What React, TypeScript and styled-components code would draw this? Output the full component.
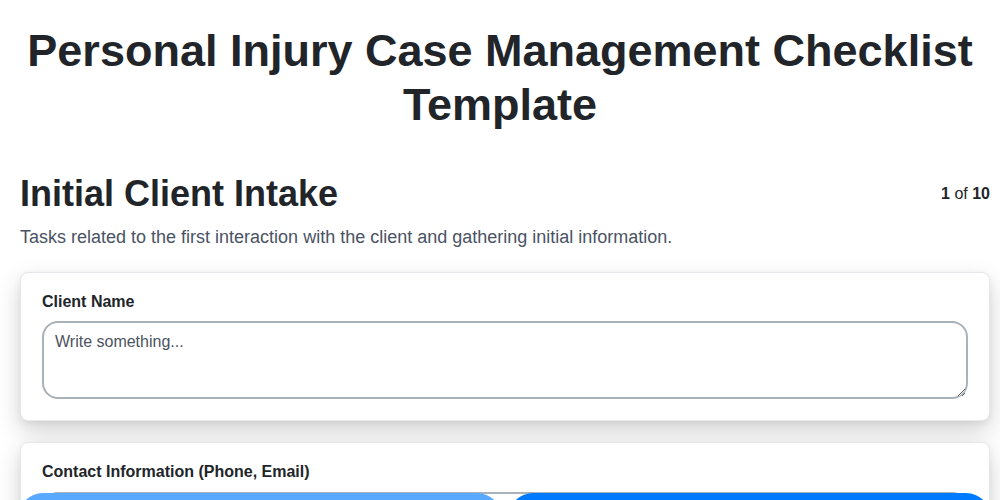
import React from "react";
import styled, { createGlobalStyle } from "styled-components";

const fields = [
  { id: "client-name", label: "Client Name" },
  { id: "contact", label: "Contact Information (Phone, Email)" },
  { id: "incident", label: "Date of Incident" },
];

const App = () => {
  return (
    <>
      <GlobalStyle />
      <Page>
        <Title>Personal Injury Case Management Checklist Template</Title>
        <Section>
          <SectionHeader>
            <SectionTitle>Initial Client Intake</SectionTitle>
            <Progress>
              <b>1</b> of <b>10</b>
            </Progress>
          </SectionHeader>
          <Description>
            Tasks related to the first interaction with the client and
            gathering initial information.
          </Description>
          <CardList>
            {fields.map((field) => (
              <Card key={field.id}>
                <Label htmlFor={field.id}>{field.label}</Label>
                <TextArea id={field.id} placeholder="Write something..." />
              </Card>
            ))}
          </CardList>
        </Section>
      </Page>
      <Footer>
        <NavButton $disabled>Previous</NavButton>
        <NavButton>Next</NavButton>
      </Footer>
    </>
  );
};

export default App;

const GlobalStyle = createGlobalStyle`
  * {
    box-sizing: border-box;
  }

  body {
    margin: 0;
    background: #ffffff;
    font-family: "Liberation Sans", Arial, sans-serif;
    color: #212529;
  }
`;

const Page = styled.main`
  display: flex;
  flex-direction: column;
  padding: 24px 0 80px;
`;

const Title = styled.h1`
  margin: 0 0 40px;
  padding: 0 20px;
  font-size: 45px;
  line-height: 1.2;
  font-weight: 700;
  text-align: center;
  color: #212529;
`;

const Section = styled.section`
  display: flex;
  flex-direction: column;
  padding: 0 10px 0 20px;
`;

const SectionHeader = styled.div`
  display: flex;
  align-items: center;
  justify-content: space-between;
`;

const SectionTitle = styled.h2`
  margin: 0;
  font-size: 36px;
  line-height: 1.2;
  font-weight: 700;
  color: #212529;
`;

const Progress = styled.div`
  font-size: 16px;
  color: #212529;

  b {
    font-weight: 700;
  }
`;

const Description = styled.p`
  margin: 9px 0 21px;
  font-size: 18px;
  line-height: 1.5;
  color: #4a5363;
`;

const CardList = styled.div`
  display: flex;
  flex-direction: column;
  gap: 21px;
`;

const Card = styled.div`
  display: flex;
  flex-direction: column;
  gap: 10px;
  padding: 19px 21px 21px;
  background: #ffffff;
  border: 1px solid #e6e7eb;
  border-radius: 8px;
  box-shadow: 0 10px 24px rgba(0, 0, 0, 0.18), 0 2px 6px rgba(0, 0, 0, 0.05);
`;

const Label = styled.label`
  font-size: 16px;
  line-height: 1.2;
  font-weight: 700;
  color: #212529;
`;

const TextArea = styled.textarea`
  height: 78px;
  padding: 10px 11px;
  border: 2px solid #a9b1ba;
  border-radius: 16px;
  font-family: "Liberation Sans", Arial, sans-serif;
  font-size: 16px;
  color: #212529;
  resize: vertical;
  outline: none;

  &::placeholder {
    color: #4b5360;
  }
`;

const Footer = styled.div`
  position: fixed;
  left: 18px;
  right: 9px;
  top: 493px;
  display: flex;
  gap: 6px;
`;

const NavButton = styled.button<{ $disabled?: boolean }>`
  flex: 1;
  height: 50px;
  border: none;
  border-radius: 25px;
  background: ${({ $disabled }) => ($disabled ? "#59a9ff" : "#007bff")};
  color: #ffffff;
  font-family: "Liberation Sans", Arial, sans-serif;
  font-size: 16px;
  font-weight: 700;
  cursor: ${({ $disabled }) => ($disabled ? "default" : "pointer")};
`;
